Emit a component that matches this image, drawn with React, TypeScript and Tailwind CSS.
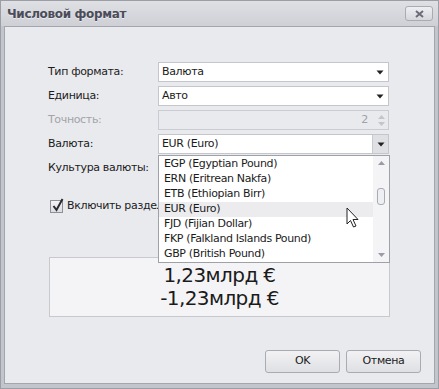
const items = [
  "EGP (Egyptian Pound)",
  "ERN (Eritrean Nakfa)",
  "ETB (Ethiopian Birr)",
  "EUR (Euro)",
  "FJD (Fijian Dollar)",
  "FKP (Falkland Islands Pound)",
  "GBP (British Pound)",
]

function Arrow() {
  return (
    <svg width="8" height="5" viewBox="0 0 8 5">
      <path d="M0.5 0.5 H7.5 L4 4.5 Z" fill="#222" />
    </svg>
  )
}

function Combo({ value, pressed }: { value: string; pressed?: boolean }) {
  return (
    <div className="flex h-[20px] w-[231px] items-center border border-[#c5c6cc] bg-white">
      <span className="flex-1 pl-[3px] text-[#1b1b1b]">{value}</span>
      <div
        className={`flex h-full w-[16px] items-center justify-center ${
          pressed ? "bg-[#dfe0e4] border-l border-[#c9cace]" : ""
        }`}
      >
        <Arrow />
      </div>
    </div>
  )
}

function Row({ label, disabled, children }: { label: string; disabled?: boolean; children: React.ReactNode }) {
  return (
    <div className="flex items-center">
      <span className={`w-[110px] ${disabled ? "text-[#a3a3a8]" : "text-[#1b1b1b]"}`}>{label}</span>
      {children}
    </div>
  )
}

export default function App() {
  return (
    <div className="relative h-[389px] w-[439px] overflow-hidden border border-[#9c9ea6] bg-[#c3c5cc] font-['DejaVu_Sans',sans-serif] text-[11px] tracking-[-0.35px]">
      {/* Title bar */}
      <div className="flex h-[25px] items-center justify-between bg-gradient-to-b from-[#dfe0e4] to-[#cfd0d6] pl-[6px] pr-[5px]">
        <span className="text-[12px] font-bold text-[#4b4c5a] [text-shadow:0_1px_0_#ffffff80]">Числовой формат</span>
        <div className="flex h-[15px] w-[28px] items-center justify-center rounded-[3px] border border-[#a9abb3] bg-gradient-to-b from-[#eeeff2] to-[#d6d7dc]">
          <svg width="9" height="8" viewBox="0 0 9 8">
            <path d="M1 1 L8 7 M8 1 L1 7" stroke="#6b6c75" strokeWidth="2" />
          </svg>
        </div>
      </div>

      {/* Client area */}
      <div className="mx-[3px] h-[358px] border border-[#a4a6ae] bg-[#e9eaee]">
        <div className="flex flex-col gap-[4px] pl-[43px] pt-[35px]">
          <Row label="Тип формата:">
            <Combo value="Валюта" />
          </Row>
          <Row label="Единица:">
            <Combo value="Авто" />
          </Row>
          <Row label="Точность:" disabled>
            <div className="flex h-[20px] w-[231px] items-center border border-[#cbccd1] bg-[#e9eaee]">
              <span className="flex-1 pr-[6px] text-right text-[#a0a0a8]">2</span>
              <div className="flex w-[14px] flex-col items-center gap-[3px]">
                <svg width="7" height="4" viewBox="0 0 7 4"><path d="M0 4 L3.5 0 L7 4 Z" fill="#c4c5ca" /></svg>
                <svg width="7" height="4" viewBox="0 0 7 4"><path d="M0 0 L3.5 4 L7 0 Z" fill="#c4c5ca" /></svg>
              </div>
            </div>
          </Row>
          <Row label="Валюта:">
            <Combo value="EUR (Euro)" pressed />
          </Row>
          <Row label="Культура валюты:">
            <div className="h-[20px] w-[231px]" />
          </Row>
        </div>

        {/* Checkbox */}
        <div className="mt-[20px] flex items-center gap-[4px] pl-[45px]">
          <div className="relative h-[13px] w-[13px] border border-[#8e9099] bg-gradient-to-b from-[#f4f4f6] to-[#dcdde2]">
            <svg className="absolute -top-[3px] left-[1px]" width="12" height="14" viewBox="0 0 12 14">
              <path d="M1.5 8 L4.5 12 L10.5 1" stroke="#2a2a2e" strokeWidth="2" fill="none" />
            </svg>
          </div>
          <span className="text-[#1b1b1b]">Включить разделитель групп</span>
        </div>

        {/* Preview */}
        <div className="ml-[44px] mt-[42px] flex h-[60px] w-[341px] flex-col items-center justify-center border border-[#c8c9ce] bg-[#f4f4f6] text-[20px] leading-[23px] tracking-[-0.6px] text-[#1b1b1b]">
          <span>1,23млрд €</span>
          <span>-1,23млрд €</span>
        </div>

        {/* Buttons */}
        <div className="mt-[33px] flex justify-end gap-[6px] pr-[13px]">
          <button className="h-[23px] w-[75px] rounded-[3px] border border-[#a9abb3] bg-gradient-to-b from-[#f2f2f4] to-[#dfe0e4] text-[#1b1b1b]">OK</button>
          <button className="h-[23px] w-[75px] rounded-[3px] border border-[#a9abb3] bg-gradient-to-b from-[#f2f2f4] to-[#dfe0e4] text-[#1b1b1b]">Отмена</button>
        </div>
      </div>

      {/* Dropdown list overlay */}
      <div className="absolute left-[157px] top-[154px] flex h-[108px] w-[232px] border border-[#9fa1a9] bg-white">
        <div className="flex flex-1 flex-col pt-[1px]">
          {items.map((it) => (
            <div
              key={it}
              className={`flex h-[15px] items-center pl-[5px] text-[#1b1b1b] ${
                it === "EUR (Euro)" ? "bg-[#ececef]" : ""
              }`}
            >
              {it}
            </div>
          ))}
        </div>
        <div className="relative flex w-[16px] flex-col items-center justify-between bg-[#f4f4f6] py-[5px]">
          <svg width="7" height="4" viewBox="0 0 7 4"><path d="M0 4 L3.5 0 L7 4 Z" fill="#9b9ca3" /></svg>
          <div className="absolute left-[4px] top-[32px] h-[17px] w-[8px] rounded-[3px] border border-[#a9abb3] bg-[#eeeff2]" />
          <svg width="7" height="4" viewBox="0 0 7 4"><path d="M0 0 L3.5 4 L7 0 Z" fill="#9b9ca3" /></svg>
        </div>
      </div>

      {/* Mouse cursor */}
      <svg className="absolute left-[345px] top-[206px]" width="14" height="22" viewBox="0 0 14 22">
        <path d="M1 1 L1 17 L4.5 13.5 L7.5 20 L10 19 L7 12.5 L12 12.5 Z" fill="#fff" stroke="#222" strokeWidth="1" strokeLinejoin="round" />
      </svg>
    </div>
  )
}
